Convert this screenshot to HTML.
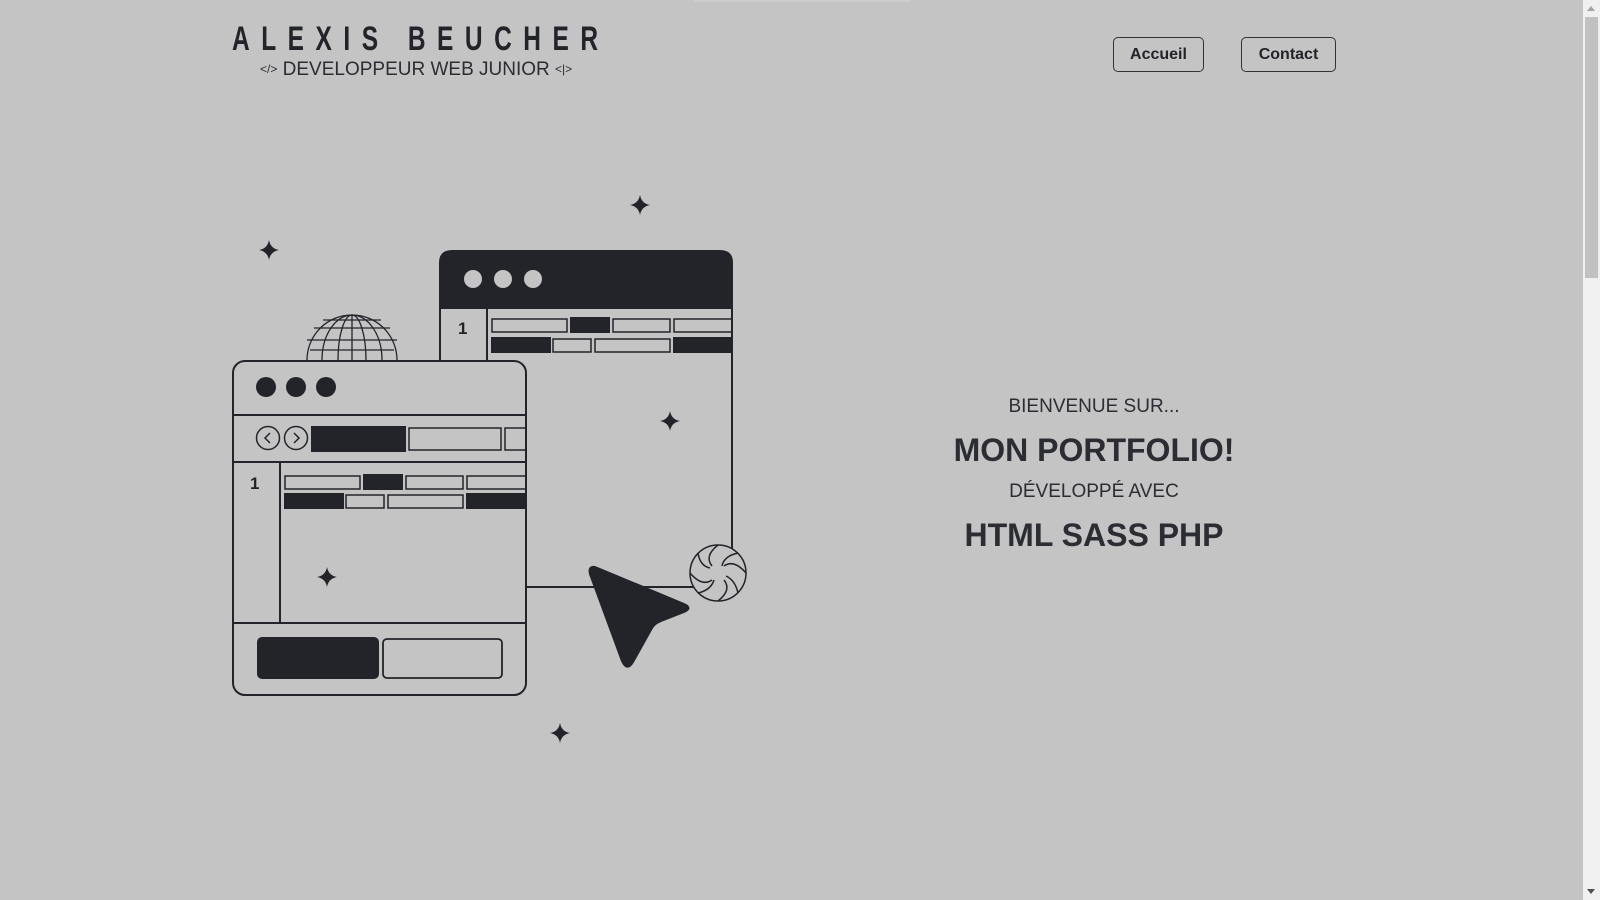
<!DOCTYPE html>
<html><head><meta charset="utf-8"><style>
html,body{margin:0;padding:0;width:1600px;height:900px;overflow:hidden;background:#c4c4c4;font-family:"Liberation Sans",sans-serif;color:#222429}
.title{position:absolute;left:232px;top:22px;font-size:34px;font-weight:bold;letter-spacing:16px;transform:scaleX(0.72);transform-origin:left top;white-space:nowrap;color:#222429;line-height:34px}
.sub{position:absolute;left:260px;top:58px;font-size:19px;white-space:nowrap;line-height:22px;color:#2b2d33}
.sub small{font-size:12px;vertical-align:2px}
.btn{position:absolute;top:37px;height:33px;border:1.5px solid #333;border-radius:5px;font-weight:bold;font-size:16px;line-height:33px;text-align:center;box-sizing:content-box}
.c{position:absolute;left:894px;width:400px;text-align:center;white-space:nowrap;color:#2b2d33}
.sb{position:absolute;right:0;top:0;width:17px;height:900px;background:#f0f0f0}
.thumb{position:absolute;left:2px;top:17px;width:13px;height:261px;background:#c1c1c1}
</style></head><body>
<div class="title">ALEXIS BEUCHER</div>
<div class="sub"><small>&lt;/&gt;</small> DEVELOPPEUR WEB JUNIOR <small>&lt;|&gt;</small></div>
<div class="btn" style="left:1113px;width:89px">Accueil</div>
<div class="btn" style="left:1241px;width:93px">Contact</div>
<div class="c" style="top:396px;font-size:19px">BIENVENUE SUR...</div>
<div class="c" style="top:432px;font-size:32px;font-weight:bold">MON PORTFOLIO!</div>
<div class="c" style="top:481px;font-size:19px">DÉVELOPPÉ AVEC</div>
<div class="c" style="top:517px;font-size:32px;font-weight:bold">HTML SASS PHP</div>
<div style="position:absolute;left:694px;top:0;width:216px;height:2px;background:#cdcdcd"></div>

<svg width="1600" height="900" style="position:absolute;left:0;top:0" fill="none" stroke="#222429" stroke-width="2">
<defs>
<symbol id="st" viewBox="-10 -10 20 20"><path d="M0-10Q1.5-1.5 10 0Q1.5 1.5 0 10Q-1.5 1.5-10 0Q-1.5-1.5 0-10Z" fill="#222429" stroke="none"/></symbol>
<clipPath id="gc"><rect x="290" y="300" width="130" height="61"/></clipPath>
</defs>
<path d="M440 308V263Q440 251 452 251H720Q732 251 732 263V308Z" fill="#222429"/>
<circle cx="473" cy="279" r="9" fill="#c4c4c4" stroke="none"/><circle cx="503" cy="279" r="9" fill="#c4c4c4" stroke="none"/><circle cx="533" cy="279" r="9" fill="#c4c4c4" stroke="none"/>
<path d="M440 308V361M487 308V361M732 308V587H526"/>
<text x="458" y="334" font-family="Liberation Sans" font-size="17" font-weight="bold" fill="#222429" stroke="none">1</text>
<rect x="492" y="319" width="75" height="13" stroke-width="1.5"/><rect x="571" y="318" width="38" height="14" fill="#222429"/><rect x="613" y="319" width="57" height="13" stroke-width="1.5"/><rect x="674" y="319" width="58" height="13" stroke-width="1.5"/>
<rect x="492" y="338" width="58" height="14" fill="#222429"/><rect x="553" y="339" width="38" height="13" stroke-width="1.5"/><rect x="595" y="339" width="75" height="13" stroke-width="1.5"/><rect x="674" y="338" width="58" height="14" fill="#222429"/>
<g clip-path="url(#gc)" stroke-width="1.3">
<circle cx="352" cy="360" r="45"/><ellipse cx="352" cy="360" rx="30" ry="45"/><ellipse cx="352" cy="360" rx="14" ry="45"/><path d="M352 315V361M307 340H397M314 328H390M310 350H394M323 320H381"/>
</g>
<rect x="233" y="361" width="293" height="334" rx="12" fill="#c4c4c4"/>
<circle cx="266" cy="387" r="10" fill="#222429" stroke="none"/><circle cx="296" cy="387" r="10" fill="#222429" stroke="none"/><circle cx="326" cy="387" r="10" fill="#222429" stroke="none"/>
<path d="M233 415H526M233 462H526M280 462V623M233 623H526"/>
<circle cx="268" cy="438" r="11.5" stroke-width="1.5"/><circle cx="296" cy="438" r="11.5" stroke-width="1.5"/>
<path d="M270 433L265 438L270 443M294 433L299 438L294 443" stroke-width="1.5"/>
<rect x="312" y="427" width="93" height="24" fill="#222429"/><rect x="409" y="428" width="92" height="22" stroke-width="1.5"/><rect x="505" y="428" width="21" height="22" stroke-width="1.5"/>
<text x="250" y="489" font-family="Liberation Sans" font-size="17" font-weight="bold" fill="#222429" stroke="none">1</text>
<rect x="285" y="476" width="75" height="13" stroke-width="1.5"/><rect x="364" y="475" width="38" height="14" fill="#222429"/><rect x="406" y="476" width="57" height="13" stroke-width="1.5"/><rect x="467" y="476" width="59" height="13" stroke-width="1.5"/>
<rect x="285" y="494" width="58" height="14" fill="#222429"/><rect x="346" y="495" width="38" height="13" stroke-width="1.5"/><rect x="388" y="495" width="75" height="13" stroke-width="1.5"/><rect x="467" y="494" width="59" height="14" fill="#222429"/>
<rect x="258" y="638" width="120" height="40" rx="4" fill="#222429"/><rect x="383" y="639" width="119" height="39" rx="4" stroke-width="1.8"/>
<path d="M595 567Q588 566 590 574L622 661Q627 672 633 662L652 628Q655 623 661 621L684 612Q693 608 684 604Z" fill="#222429" stroke="#222429" stroke-linejoin="round"/>
<g stroke-width="1.5"><circle cx="718" cy="573" r="28" fill="#c4c4c4"/>
<path d="M718 545Q704 556 712 566M746 573Q734 559 724 566M718 601Q732 590 724 580M690 573Q702 587 712 580M738 553Q724 556 722 566M738 593Q735 580 726 576M698 593Q711 590 714 580M698 553Q700 566 710 568"/></g>
<use href="#st" x="259" y="240" width="20" height="20"/>
<use href="#st" x="630" y="195" width="20" height="20"/>
<use href="#st" x="660" y="411" width="20" height="20"/>
<use href="#st" x="317" y="567" width="20" height="20"/>
<use href="#st" x="550" y="723" width="20" height="20"/>
</svg>
<div class="sb"><div style="position:absolute;left:4px;top:6px;width:0;height:0;border-left:4.5px solid transparent;border-right:4.5px solid transparent;border-bottom:5px solid #a3a3a3"></div><div class="thumb"></div><div style="position:absolute;left:4px;bottom:6px;width:0;height:0;border-left:4.5px solid transparent;border-right:4.5px solid transparent;border-top:5px solid #505050"></div></div>
</body></html>
